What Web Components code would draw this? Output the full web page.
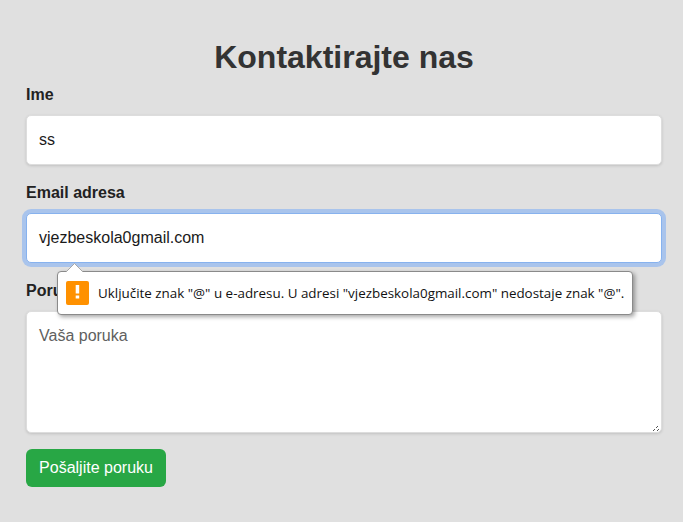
<!DOCTYPE html>
<html lang="hr">
<head>
<meta charset="utf-8">
<title>Kontaktirajte nas</title>
<style>
  html, body { margin: 0; height: 100%; }
  body {
    background: #e0e0e0;
    font-family: "Liberation Sans", Arial, sans-serif;
    overflow: hidden;
  }
</style>
</head>
<body>
<contact-page>
  <form-field label="Ime">ss</form-field>
  <form-field label="Email adresa" focused>
    vjezbeskola0gmail.com
    <validation-bubble slot="bubble">Uključite znak "@" u e-adresu. U adresi "vjezbeskola0gmail.com" nedostaje znak "@".</validation-bubble>
  </form-field>
  <form-field label="Poruka" multiline placeholder>Vaša poruka</form-field>
  <submit-button>Pošaljite poruku</submit-button>
</contact-page>

<script>
class ContactPage extends HTMLElement {
  constructor() {
    super();
    this.attachShadow({ mode: 'open' });
    this.shadowRoot.innerHTML = `
      <style>
        :host {
          display: block;
          padding: 20px 21px 0 26px;
        }
        h1 {
          margin: 19px 0 10px;
          font-size: 32px;
          line-height: 37px;
          font-weight: bold;
          text-align: center;
          color: #333;
        }
      </style>
      <h1>Kontaktirajte nas</h1>
      <slot></slot>
    `;
  }
}

class FormField extends HTMLElement {
  constructor() {
    super();
    this.attachShadow({ mode: 'open' });
  }

  connectedCallback() {
    const label = this.getAttribute('label') || '';
    const multiline = this.hasAttribute('multiline');
    this.shadowRoot.innerHTML = `
      <style>
        :host {
          display: block;
          position: relative;
          margin-bottom: ${multiline ? '16px' : '19px'};
        }
        label {
          display: block;
          margin-bottom: 11px;
          font-size: 16px;
          line-height: 18px;
          font-weight: bold;
          color: #222;
        }
        .control {
          box-sizing: border-box;
          position: relative;
          height: ${multiline ? '122px' : '50px'};
          padding: 15px 12px;
          font-size: 16px;
          line-height: 18px;
          color: ${this.hasAttribute('placeholder') ? '#5f5f5f' : '#1a1a1a'};
          background: #fff;
          border: 1px solid #ddd;
          border-radius: 5px;
          box-shadow: 0 1px 3px rgba(0, 0, 0, 0.14);
          outline: none;
        }
        :host([focused]) .control {
          border-color: #87b2ee;
          box-shadow: 0 0 0 4px #a9c4ec;
        }
        .grip {
          position: absolute;
          right: 0;
          bottom: 0;
          width: 9px;
          height: 9px;
        }
      </style>
      <label>${label}</label>
      <div class="control" role="textbox" contenteditable="true"><slot></slot>${multiline ? `
        <svg class="grip" viewBox="0 0 9 9" shape-rendering="crispEdges" contenteditable="false">
          <path d="M1 8 8 1M5 8 8 5" stroke="#555" stroke-width="1" stroke-dasharray="1 1" fill="none"/>
        </svg>` : ''}</div>
      <slot name="bubble"></slot>
    `;
  }
}

class ValidationBubble extends HTMLElement {
  constructor() {
    super();
    this.attachShadow({ mode: 'open' });
    this.shadowRoot.innerHTML = `
      <style>
        :host {
          position: absolute;
          left: 31px;
          top: 87px;
          z-index: 2;
          display: block;
        }
        .box {
          display: flex;
          align-items: center;
          gap: 9px;
          box-sizing: border-box;
          height: 44px;
          padding: 0 8px;
          white-space: nowrap;
          font-family: "Open Sans", "Noto Sans", sans-serif;
          font-size: 13.4px;
          color: #111;
          background: #fff;
          border: 1px solid #8a8a8a;
          border-radius: 4px;
          box-shadow: 2px 2px 4px rgba(0, 0, 0, 0.35);
        }
        .arrow {
          position: absolute;
          left: 8px;
          top: -9px;
          width: 24px;
          height: 10px;
          display: block;
        }
        .icon { flex: none; width: 23px; height: 24px; display: block; }
      </style>
      <svg class="arrow" viewBox="0 0 24 10">
        <path d="M1 10 9.500 1.500 18 10" fill="#fff" stroke="#a8a8a8" stroke-width="1"/>
      </svg>
      <div class="box">
        <svg class="icon" viewBox="0 0 23 24">
          <rect width="23" height="24" rx="2" fill="#ff9100"/>
          <rect x="9.700" y="4" width="3.500" height="8.500" fill="#fff"/>
          <rect x="9.700" y="14.500" width="3.500" height="3" fill="#fff"/>
        </svg>
        <span><slot></slot></span>
      </div>
    `;
  }
}

class SubmitButton extends HTMLElement {
  constructor() {
    super();
    this.attachShadow({ mode: 'open' });
    this.shadowRoot.innerHTML = `
      <style>
        :host { display: block; }
        button {
          display: block;
          width: 140px;
          height: 38px;
          padding: 0;
          border: 0;
          border-radius: 6px;
          background: #28a745;
          color: #fff;
          font-family: inherit;
          font-size: 16px;
          cursor: pointer;
        }
      </style>
      <button type="submit"><slot></slot></button>
    `;
  }
}

customElements.define('contact-page', ContactPage);
customElements.define('form-field', FormField);
customElements.define('validation-bubble', ValidationBubble);
customElements.define('submit-button', SubmitButton);
</script>
</body>
</html>
